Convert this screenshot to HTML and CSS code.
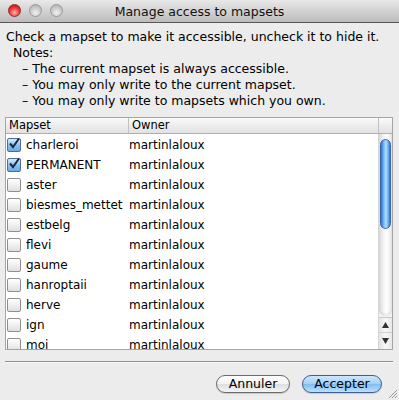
FILE: index.html
```html
<!DOCTYPE html>
<html>
<head>
<meta charset="utf-8">
<link rel="stylesheet" href="styles.css">
</head>
<body>
<div class="window">
  <div class="titlebar">
    <div class="lights">
      <span class="light red"></span>
      <span class="light"></span>
      <span class="light"></span>
    </div>
    <div class="title">Manage access to mapsets</div>
  </div>
  <div class="content">
    <div class="intro">
      <div class="line">Check a mapset to make it accessible, uncheck it to hide it.</div>
      <div class="line notes">Notes:</div>
      <div class="line note">– The current mapset is always accessible.</div>
      <div class="line note">– You may only write to the current mapset.</div>
      <div class="line note">– You may only write to mapsets which you own.</div>
    </div>
    <div class="table">
      <div class="thead">
        <div class="th c1">Mapset</div>
        <div class="th c2">Owner</div>
        <div class="th corner"></div>
      </div>
      <div class="tbody">
        <div class="rows">
          <div class="row"><span class="cb on"><svg viewBox="0 0 14 14" width="14" height="14"><path d="M3 6.5 L6 10 L12 1.5" fill="none" stroke="#1a2a44" stroke-width="2"/></svg></span><span class="name">charleroi</span><span class="owner">martinlaloux</span></div>
          <div class="row"><span class="cb on"><svg viewBox="0 0 14 14" width="14" height="14"><path d="M3 6.5 L6 10 L12 1.5" fill="none" stroke="#1a2a44" stroke-width="2"/></svg></span><span class="name">PERMANENT</span><span class="owner">martinlaloux</span></div>
          <div class="row"><span class="cb"></span><span class="name">aster</span><span class="owner">martinlaloux</span></div>
          <div class="row"><span class="cb"></span><span class="name">biesmes_mettet</span><span class="owner">martinlaloux</span></div>
          <div class="row"><span class="cb"></span><span class="name">estbelg</span><span class="owner">martinlaloux</span></div>
          <div class="row"><span class="cb"></span><span class="name">flevi</span><span class="owner">martinlaloux</span></div>
          <div class="row"><span class="cb"></span><span class="name">gaume</span><span class="owner">martinlaloux</span></div>
          <div class="row"><span class="cb"></span><span class="name">hanroptaii</span><span class="owner">martinlaloux</span></div>
          <div class="row"><span class="cb"></span><span class="name">herve</span><span class="owner">martinlaloux</span></div>
          <div class="row"><span class="cb"></span><span class="name">ign</span><span class="owner">martinlaloux</span></div>
          <div class="row"><span class="cb"></span><span class="name">moi</span><span class="owner">martinlaloux</span></div>
        </div>
        <div class="scrollbar">
          <div class="track">
            <div class="thumb"></div>
          </div>
          <div class="arrow up"><svg width="7" height="6" viewBox="0 0 7 6"><path d="M3.5 0 L7 6 L0 6 Z" fill="#333"/></svg></div>
          <div class="arrow down"><svg width="7" height="6" viewBox="0 0 7 6"><path d="M0 0 L7 0 L3.5 6 Z" fill="#333"/></svg></div>
        </div>
      </div>
    </div>
  </div>
  <div class="separator"></div>
  <div class="buttons">
    <button class="btn">Annuler</button>
    <button class="btn primary">Accepter</button>
  </div>
  <svg class="grip" width="10" height="10" viewBox="0 0 10 10">
    <path d="M9 1 L1 9 M9 4 L4 9 M9 7 L7 9" stroke="#999" stroke-width="1"/>
  </svg>
</div>
</body>
</html>
```
FILE: styles.css
```css
* { box-sizing: border-box; }
html, body { margin: 0; padding: 0; }
body {
  font-family: "DejaVu Sans", "Liberation Sans", sans-serif;
  font-size: 12px;
  color: #000;
  background: #ececec;
}
.window {
  position: relative;
  width: 399px;
  height: 400px;
  background: #ececec;
  display: flex;
  flex-direction: column;
  overflow: hidden;
}
.titlebar {
  height: 23px;
  flex: none;
  background: linear-gradient(#e9e9e9, #d2d2d2 50%, #bcbcbc);
  border-bottom: 1px solid #585858;
  display: flex;
  align-items: center;
  position: relative;
}
.lights {
  display: flex;
  gap: 8px;
  padding-left: 8px;
  position: absolute;
  left: 0;
  top: 4px;
}
.light {
  width: 13px;
  height: 13px;
  border-radius: 50%;
  background: radial-gradient(circle at 50% 70%, #f2f2f2, #c4c4c4 60%, #a9a9a9);
  border: 1px solid #9a9a9a;
}
.light.red {
  background: radial-gradient(circle at 50% 70%, #ffb0b0, #f03030 55%, #b01010);
  border-color: #8a2a2a;
}
.title {
  flex: 1;
  text-align: center;
  font-size: 12.5px;
  color: #111;
  padding-top: 1px;
}
.content {
  padding: 6px 6px 0 5px;
}
.intro {
  font-size: 12.5px;
}
.intro .line {
  height: 16px;
  line-height: 16px;
  padding-left: 1px;
  white-space: nowrap;
}
.intro .notes { padding-left: 8px; }
.intro .note { padding-left: 17px; }
.table {
  margin-top: 8px;
  border: 1px solid #a5a5a5;
  width: 388px;
  background: #fff;
}
.thead {
  display: flex;
  height: 16px;
  background: linear-gradient(#fafafa, #ededed 50%, #e2e2e2);
  border-bottom: 1px solid #b0b0b0;
}
.th {
  line-height: 15px;
  font-size: 11.5px;
  padding-left: 3px;
  border-right: 1px solid #c0c0c0;
}
.th.c1 { width: 123px; }
.th.c2 { width: 250px; }
.th.corner { flex: 1; border-right: none; }
.tbody {
  display: flex;
  height: 215px;
  overflow: hidden;
}
.rows {
  flex: 1;
  padding-top: 1px;
  font-size: 12px;
}
.row {
  height: 20px;
  display: flex;
  align-items: center;
  white-space: nowrap;
}
.cb {
  width: 14px;
  height: 14px;
  margin-left: 1px;
  border: 1px solid #8e8e8e;
  border-radius: 2px;
  background: linear-gradient(#ffffff, #f0f0f0 50%, #e0e0e0);
  position: relative;
  flex: none;
}
.cb.on {
  background: linear-gradient(#d7eafc, #8fc2f0 50%, #6aaaea);
  border-color: #4d6d96;
}
.cb svg { position: absolute; left: -1px; top: -2px; }
.name {
  width: 103px;
  margin-left: 5px;
}
.scrollbar {
  width: 14px;
  flex: none;
  display: flex;
  flex-direction: column;
  background: #f2f2f2;
  border-left: 1px solid #d6d6d6;
}
.track {
  flex: 1;
  background: linear-gradient(90deg, #d9d9d9, #f7f7f7 40%, #ffffff 60%, #e6e6e6);
  border-radius: 0 0 7px 7px;
  margin-bottom: 1px;
  padding-top: 5px;
  box-shadow: inset 0 -2px 2px rgba(0,0,0,0.08);
}
.thumb {
  height: 90px;
  margin: 0 1px;
  border-radius: 6px;
  background: linear-gradient(90deg, #2a6fcf, #6fb5f5 30%, #b5defd 55%, #68b0f2 80%, #2f73cc);
  border: 1px solid #3868a8;
}
.arrow {
  height: 16px;
  display: flex;
  align-items: center;
  justify-content: center;
  background: linear-gradient(90deg, #e3e3e3, #f8f8f8 50%, #e8e8e8);
}
.arrow.up { border-top: 1px solid #c8c8c8; border-bottom: 1px solid #cfcfcf; }
.separator {
  margin: 11px 6px 0 5px;
  border-top: 1px solid #8e8e8e;
  border-bottom: 1px solid #f8f8f8;
}
.buttons {
  display: flex;
  justify-content: flex-end;
  gap: 12px;
  padding: 12px 17px 0 0;
}
.btn {
  font-family: "DejaVu Sans", "Liberation Sans", sans-serif;
  font-size: 12.5px;
  height: 16px;
  line-height: 14px;
  padding: 0;
  border-radius: 9px;
  border: 1px solid #6a6a6a;
  background: linear-gradient(#ffffff, #f2f2f2 50%, #dedede 51%, #f4f4f4);
  color: #000;
  box-sizing: content-box;
  box-shadow: 0 1px 1px rgba(0,0,0,0.15);
}
.btn:not(.primary) { width: 72px; }
.btn.primary {
  width: 78px;
  border-color: #3d5f8f;
  background: linear-gradient(#cfe6fb, #a3cff6 50%, #80bdf2 51%, #bfe0fb);
}
.grip {
  position: absolute;
  right: 1px;
  bottom: 1px;
}
```
